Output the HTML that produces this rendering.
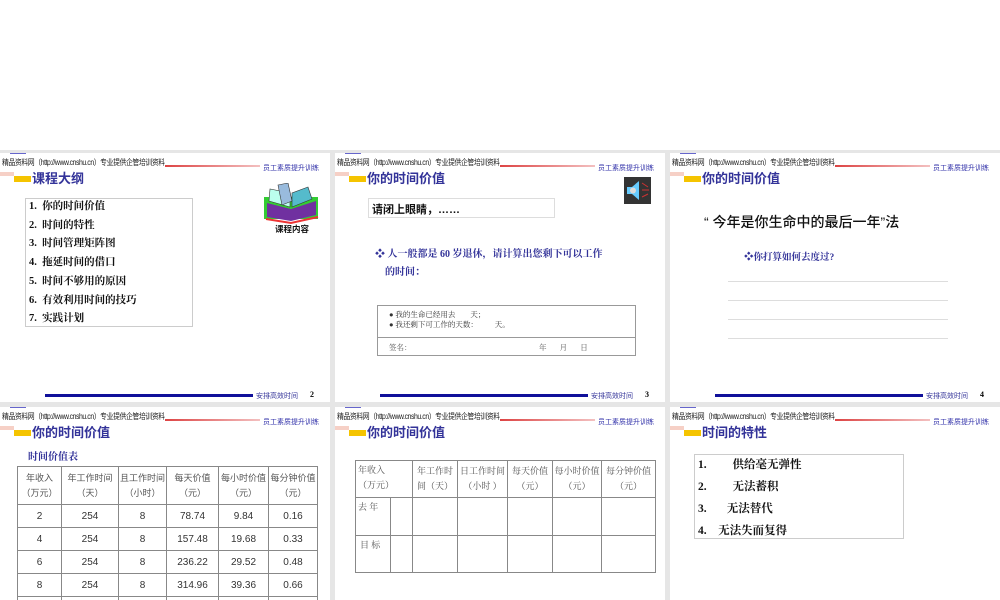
<!DOCTYPE html>
<html><head><meta charset="utf-8"><style>
*{margin:0;padding:0;box-sizing:border-box}
html,body{width:1000px;height:600px;overflow:hidden}
body{background:#fff;position:relative;font-family:"Liberation Sans","Noto Sans CJK SC",sans-serif}
.bg{position:absolute;left:0;top:150px;width:1000px;height:450px;background:#e6e6e6}
.s{position:absolute;width:330px;height:249px;background:#fff;overflow:hidden}
.a{position:absolute;white-space:nowrap}
.hd{left:2px;top:4px;font-size:8px;color:#222;letter-spacing:-0.5px;transform:scaleX(0.86);transform-origin:left}
.rl{left:165px;top:12px;width:95px;height:2px;background:linear-gradient(90deg,#d44,#f3c0c0)}
.tr{left:263px;top:10px;font-size:7px;color:#3333aa}
.tl{left:32px;top:15px;font-size:13px;color:#333399;font-weight:bold}
.yb{left:14px;top:23px;width:17px;height:6px;background:#f5c400}
.rb{left:0;top:19px;width:14px;height:4px;background:#f0b0a0;opacity:.6}
.bb{left:10px;top:0;width:16px;height:1px;background:#66c}
.fl{left:45px;top:241px;width:208px;height:3px;background:#10109a}
.ft{left:256px;top:238px;font-size:7px;color:#333399}
.fn{left:310px;top:237px;font-size:8px;font-weight:bold;font-family:"Liberation Serif",serif}
.box{position:absolute;border:1px solid #ccc}
.li{font-size:10.5px;color:#111;font-family:"Liberation Serif","Noto Serif CJK SC",serif;font-weight:bold}
.bl{color:#333399;font-family:"Liberation Serif","Noto Serif CJK SC",serif;font-size:10px}
table{position:absolute;border-collapse:collapse;font-size:10px;color:#222;table-layout:fixed}
td{border:1px solid #888;text-align:center;padding:0;white-space:nowrap;overflow:hidden}
</style></head><body>
<div class="bg"></div>

<div class="s" style="left:0;top:153px">
<div class="a bb"></div><div class="a rb"></div><div class="a yb"></div>
<div class="a hd">精品资料网（http://www.cnshu.cn）专业提供企管培训资料</div><div class="a rl"></div>
<div class="a tr">员工素质提升训练</div>
<div class="a tl">课程大纲</div>
<div class="box" style="left:25px;top:45px;width:168px;height:129px"></div>
<div class="a li" style="left:29px;top:45px;line-height:18.7px">1.&nbsp; 你的时间价值<br>2.&nbsp; 时间的特性<br>3.&nbsp; 时间管理矩阵图<br>4.&nbsp; 拖延时间的借口<br>5.&nbsp; 时间不够用的原因<br>6.&nbsp; 有效利用时间的技巧<br>7.&nbsp; 实践计划</div>
<svg class="a" style="left:262px;top:30px" width="58" height="42" viewBox="0 0 58 42"><rect x="2" y="14" width="54" height="22" fill="#3c3" /><path d="M5 34 L29 38 L54 32 L54 18 L29 26 L5 20Z" fill="#7030a0"/><path d="M7 18 L28 24 L28 10 L8 6Z" fill="#bfe" stroke="#333" stroke-width=".6"/><path d="M30 24 L50 16 L46 4 L30 10Z" fill="#5bc" stroke="#333" stroke-width=".6"/><path d="M16 2 L26 0 L30 18 L20 22Z" fill="#9bd" stroke="#333" stroke-width=".6"/><path d="M4 36 L29 40 L56 34" stroke="#e33" stroke-width="2" fill="none"/></svg>
<div class="a" style="left:275px;top:70px;font-size:8.5px;font-weight:bold;color:#111">课程内容</div>
<div class="a fl"></div><div class="a ft">安排高效时间</div><div class="a fn">2</div>
</div>

<div class="s" style="left:335px;top:153px">
<div class="a bb"></div><div class="a rb"></div><div class="a yb"></div>
<div class="a hd">精品资料网（http://www.cnshu.cn）专业提供企管培训资料</div><div class="a rl"></div>
<div class="a tr">员工素质提升训练</div>
<div class="a tl">你的时间价值</div>
<svg class="a" style="left:289px;top:24px" width="27" height="27"><rect width="27" height="27" fill="#333"/><path d="M3 10h5l7-6v19l-7-6H3z" fill="#6cf"/><circle cx="9" cy="13.5" r="3" fill="#ddd"/><path d="M18 6l6 4M18 13h7M18 20l6-3" stroke="#c33" stroke-width="1"/></svg>
<div class="box" style="left:33px;top:45px;width:187px;height:20px;border-color:#ddd"></div>
<div class="a" style="left:37px;top:48px;font-size:11px;font-weight:bold;color:#111">请闭上眼睛，……</div>
<div class="a bl" style="left:40px;top:93px;line-height:18px;font-weight:bold">❖ 人一般都是 60 岁退休，请计算出您剩下可以工作<br>&nbsp;&nbsp;&nbsp;&nbsp;的时间：</div>
<div class="box" style="left:42px;top:152px;width:259px;height:51px;border-color:#999"></div>
<div class="a" style="left:42px;top:184px;width:259px;height:1px;background:#999"></div>
<div class="a" style="left:54px;top:157px;font-size:7.5px;line-height:10px;color:#333;font-family:'Liberation Serif','Noto Serif CJK SC',serif">● 我的生命已经用去&nbsp;&nbsp;&nbsp;&nbsp;&nbsp;&nbsp;&nbsp;&nbsp;天；<br>● 我还剩下可工作的天数：&nbsp;&nbsp;&nbsp;&nbsp;&nbsp;&nbsp;&nbsp;&nbsp;&nbsp;天。</div>
<div class="a" style="left:54px;top:189px;font-size:7.5px;color:#555;font-family:'Liberation Serif','Noto Serif CJK SC',serif">签名：</div>
<div class="a" style="left:204px;top:189px;font-size:7.5px;color:#555;font-family:'Liberation Serif','Noto Serif CJK SC',serif">年&nbsp;&nbsp;&nbsp;&nbsp;&nbsp;&nbsp;&nbsp;月&nbsp;&nbsp;&nbsp;&nbsp;&nbsp;&nbsp;&nbsp;日</div>
<div class="a fl"></div><div class="a ft">安排高效时间</div><div class="a fn">3</div>
</div>

<div class="s" style="left:670px;top:153px">
<div class="a bb"></div><div class="a rb"></div><div class="a yb"></div>
<div class="a hd">精品资料网（http://www.cnshu.cn）专业提供企管培训资料</div><div class="a rl"></div>
<div class="a tr">员工素质提升训练</div>
<div class="a tl">你的时间价值</div>
<div class="a" style="left:34px;top:59px;font-size:14px;color:#111;font-weight:500">“ 今年是你生命中的最后一年”法</div>
<div class="a bl" style="left:74px;top:96px;font-size:9.5px;font-weight:bold">❖你打算如何去度过?</div>
<div class="a" style="left:58px;top:128px;width:220px;height:1px;background:#ddd"></div>
<div class="a" style="left:58px;top:147px;width:220px;height:1px;background:#ddd"></div>
<div class="a" style="left:58px;top:166px;width:220px;height:1px;background:#ddd"></div>
<div class="a" style="left:58px;top:185px;width:220px;height:1px;background:#ddd"></div>
<div class="a fl"></div><div class="a ft">安排高效时间</div><div class="a fn">4</div>
</div>

<div class="s" style="left:0;top:407px;height:193px">
<div class="a bb"></div><div class="a rb"></div><div class="a yb"></div>
<div class="a hd">精品资料网（http://www.cnshu.cn）专业提供企管培训资料</div><div class="a rl"></div>
<div class="a tr">员工素质提升训练</div>
<div class="a tl">你的时间价值</div>
<div class="a bl" style="left:28px;top:41px;font-weight:bold">时间价值表</div>
<table style="left:17px;top:59px;width:301px;color:#333">
<colgroup><col style="width:44px"><col style="width:57px"><col style="width:48px"><col style="width:52px"><col style="width:50px"><col></colgroup>
<tr style="height:38px;font-size:9px;line-height:15px;color:#555"><td>年收入<br>（万元）</td><td>年工作时间<br>（天）</td><td>且工作时间<br>（小时）</td><td>每天价值<br>（元）</td><td>每小时价值<br>（元）</td><td>每分钟价值<br>（元）</td></tr>
<tr style="height:23px"><td>2</td><td>254</td><td>8</td><td>78.74</td><td>9.84</td><td>0.16</td></tr>
<tr style="height:23px"><td>4</td><td>254</td><td>8</td><td>157.48</td><td>19.68</td><td>0.33</td></tr>
<tr style="height:23px"><td>6</td><td>254</td><td>8</td><td>236.22</td><td>29.52</td><td>0.48</td></tr>
<tr style="height:23px"><td>8</td><td>254</td><td>8</td><td>314.96</td><td>39.36</td><td>0.66</td></tr>
<tr style="height:23px"><td></td><td></td><td></td><td></td><td></td><td></td></tr>
</table>
</div>

<div class="s" style="left:335px;top:407px;height:193px">
<div class="a bb"></div><div class="a rb"></div><div class="a yb"></div>
<div class="a hd">精品资料网（http://www.cnshu.cn）专业提供企管培训资料</div><div class="a rl"></div>
<div class="a tr">员工素质提升训练</div>
<div class="a tl">你的时间价值</div>
<table style="left:20px;top:53px;width:301px;font-size:9px;color:#555;font-family:'Liberation Serif','Noto Serif CJK SC',serif">
<colgroup><col style="width:35px"><col style="width:22px"><col style="width:45px"><col style="width:50px"><col style="width:45px"><col style="width:49px"><col></colgroup>
<tr style="height:37px;line-height:15px"><td colspan="2" style="text-align:left;vertical-align:top;padding:2px">年收入<br>（万元）</td><td>年工作时<br>间（天）</td><td>日工作时间<br>（小时 ）</td><td>每天价值<br>（元）</td><td>每小时价值<br>（元）</td><td>每分钟价值<br>（元）</td></tr>
<tr style="height:38px"><td style="text-align:left;vertical-align:top;padding:2px">去 年</td><td></td><td></td><td></td><td></td><td></td><td></td></tr>
<tr style="height:37px"><td style="text-align:left;vertical-align:top;padding:2px 4px">目 标</td><td></td><td></td><td></td><td></td><td></td><td></td></tr>
</table>
</div>

<div class="s" style="left:670px;top:407px;height:193px">
<div class="a bb"></div><div class="a rb"></div><div class="a yb"></div>
<div class="a hd">精品资料网（http://www.cnshu.cn）专业提供企管培训资料</div><div class="a rl"></div>
<div class="a tr">员工素质提升训练</div>
<div class="a tl">时间的特性</div>
<div class="box" style="left:24px;top:47px;width:210px;height:85px;border-color:#ccc"></div>
<div class="a li" style="left:28px;top:47px;line-height:22px;font-size:11.5px">1.&nbsp;&nbsp;&nbsp;&nbsp;&nbsp;&nbsp;&nbsp;&nbsp; 供给毫无弹性<br>2.&nbsp;&nbsp;&nbsp;&nbsp;&nbsp;&nbsp;&nbsp;&nbsp; 无法蓄积<br>3.&nbsp;&nbsp;&nbsp;&nbsp;&nbsp;&nbsp; 无法替代<br>4.&nbsp;&nbsp;&nbsp; 无法失而复得</div>
</div>
</body></html>
